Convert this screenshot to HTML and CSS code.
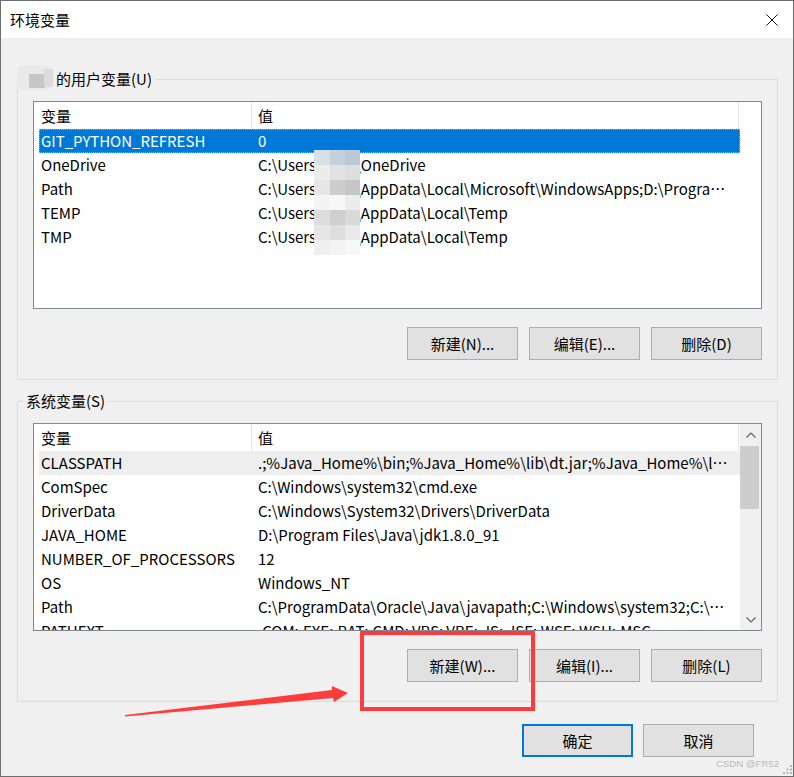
FILE: index.html
```html
<!DOCTYPE html>
<html lang="zh-CN">
<head>
    <meta charset="UTF-8">
    <title>环境变量</title>
    <link rel="stylesheet" href="styles.css">
</head>
<body>
    <div class="window">
        <!-- 标题栏 -->
        <div class="titlebar">
            <span class="title">环境变量</span>
            <svg class="close-icon" width="12" height="12" viewBox="0 0 12 12">
                <path d="M0.5 0.5 L11.5 11.5 M11.5 0.5 L0.5 11.5" stroke="#111" stroke-width="1" fill="none"/>
            </svg>
        </div>

        <!-- 用户变量 -->
        <div class="group">
            <div class="group-label"><span class="name-mask"></span>的用户变量(U)</div>
            <div class="label-mosaic"><div class="lm-dark"></div><div class="lm-mid"></div></div>
            <div class="listview">
                <div class="lv-body">
                    <div class="lv-header">
                        <div class="col-name">变量</div>
                        <div class="col-value">值</div>
                    </div>
                    <div class="lv-row selected">
                        <div class="col-name">GIT_PYTHON_REFRESH</div>
                        <div class="col-value">0</div>
                    </div>
                    <div class="lv-row">
                        <div class="col-name">OneDrive</div>
                        <div class="col-value">C:\Users\<span class="user-mask"></span>\OneDrive</div>
                    </div>
                    <div class="lv-row">
                        <div class="col-name">Path</div>
                        <div class="col-value">C:\Users\<span class="user-mask"></span>\AppData\Local\Microsoft\WindowsApps;D:\Program Files\Git\cmd</div>
                    </div>
                    <div class="lv-row">
                        <div class="col-name">TEMP</div>
                        <div class="col-value">C:\Users\<span class="user-mask"></span>\AppData\Local\Temp</div>
                    </div>
                    <div class="lv-row">
                        <div class="col-name">TMP</div>
                        <div class="col-value">C:\Users\<span class="user-mask"></span>\AppData\Local\Temp</div>
                    </div>
                </div>
                <!-- 打码 -->
                <div class="mosaic">
                    <i style="background:#d8e0e7"></i><i style="background:#c3d1dd"></i><i style="background:#b9c9d6"></i>
                    <i style="background:#ececec"></i><i style="background:#e2e2e2"></i><i style="background:#dedede"></i>
                    <i style="background:#e6e6e6"></i><i style="background:#cdcdcd"></i><i style="background:#c6c6c6"></i>
                    <i style="background:#f4f4f4"></i><i style="background:#f7f7f7"></i><i style="background:#ececec"></i>
                    <i style="background:#dcdcdc"></i><i style="background:#cfcfcf"></i><i style="background:#d9d9d9"></i>
                    <i style="background:#e6e6e6"></i><i style="background:#dedede"></i><i style="background:#e9e9e9"></i>
                    <i style="background:#efefef"></i><i style="background:#f3f3f3"></i><i style="background:#f8f8f8"></i>
                </div>
            </div>
            <div class="btn-row">
                <button class="btn">新建(N)...</button>
                <button class="btn">编辑(E)...</button>
                <button class="btn">删除(D)</button>
            </div>
        </div>

        <!-- 系统变量 -->
        <div class="group">
            <div class="group-label">系统变量(S)</div>
            <div class="listview">
                <div class="lv-body">
                    <div class="lv-header">
                        <div class="col-name">变量</div>
                        <div class="col-value">值</div>
                    </div>
                    <div class="lv-row inactive">
                        <div class="col-name">CLASSPATH</div>
                        <div class="col-value">.;%Java_Home%\bin;%Java_Home%\lib\dt.jar;%Java_Home%\lib\tools.jar</div>
                    </div>
                    <div class="lv-row">
                        <div class="col-name">ComSpec</div>
                        <div class="col-value">C:\Windows\system32\cmd.exe</div>
                    </div>
                    <div class="lv-row">
                        <div class="col-name">DriverData</div>
                        <div class="col-value">C:\Windows\System32\Drivers\DriverData</div>
                    </div>
                    <div class="lv-row">
                        <div class="col-name">JAVA_HOME</div>
                        <div class="col-value">D:\Program Files\Java\jdk1.8.0_91</div>
                    </div>
                    <div class="lv-row">
                        <div class="col-name">NUMBER_OF_PROCESSORS</div>
                        <div class="col-value">12</div>
                    </div>
                    <div class="lv-row">
                        <div class="col-name">OS</div>
                        <div class="col-value">Windows_NT</div>
                    </div>
                    <div class="lv-row">
                        <div class="col-name">Path</div>
                        <div class="col-value">C:\ProgramData\Oracle\Java\javapath;C:\Windows\system32;C:\Windows</div>
                    </div>
                    <div class="lv-row">
                        <div class="col-name">PATHEXT</div>
                        <div class="col-value">.COM;.EXE;.BAT;.CMD;.VBS;.VBE;.JS;.JSE;.WSF;.WSH;.MSC</div>
                    </div>
                </div>
                <div class="scrollbar">
                    <div class="sb-arrow">
                        <svg width="10" height="6" viewBox="0 0 10 6"><polyline points="0.5,5.5 5,1 9.5,5.5" fill="none" stroke="#606060" stroke-width="1.2"/></svg>
                    </div>
                    <div class="sb-thumb"></div>
                    <div class="sb-track"></div>
                    <div class="sb-arrow">
                        <svg width="10" height="6" viewBox="0 0 10 6"><polyline points="0.5,0.5 5,5 9.5,0.5" fill="none" stroke="#606060" stroke-width="1.2"/></svg>
                    </div>
                </div>
            </div>
            <div class="btn-row">
                <button class="btn">新建(W)...</button>
                <button class="btn">编辑(I)...</button>
                <button class="btn">删除(L)</button>
            </div>
        </div>

        <div class="dialog-buttons">
            <button class="btn default">确定</button>
            <button class="btn">取消</button>
        </div>

        <div class="watermark">CSDN @FR52</div>
        <svg class="grip" width="9" height="9" viewBox="0 0 9 9">
            <rect x="7" y="0" width="2" height="2" fill="#b5b5b5"/>
            <rect x="3.5" y="3.5" width="2" height="2" fill="#b5b5b5"/>
            <rect x="7" y="3.5" width="2" height="2" fill="#b5b5b5"/>
            <rect x="0" y="7" width="2" height="2" fill="#b5b5b5"/>
            <rect x="3.5" y="7" width="2" height="2" fill="#b5b5b5"/>
            <rect x="7" y="7" width="2" height="2" fill="#b5b5b5"/>
        </svg>

        <!-- 红色标注 -->
        <svg class="annotation" width="794" height="777" viewBox="0 0 794 777">
            <rect x="362" y="633" width="171" height="76" fill="none" stroke="#ff3c3c" stroke-width="4"/>
            <polygon points="125,715 332,690 332,686 348,693 334,702 333,698 125,716.5" fill="#ff3c3c"/>
        </svg>
    </div>
</body>
</html>
```

FILE: styles.css
```css
/* 环境变量对话框 */
* {
    margin: 0;
    padding: 0;
    box-sizing: border-box;
}

body {
    font-family: "Noto Sans CJK SC", "Liberation Sans", sans-serif;
    font-size: 15px;
    color: #000;
    background: #fff;
}

.window {
    position: relative;
    width: 794px;
    height: 777px;
    border: 1px solid #6e6e6e;
    background: #f0f0f0;
    overflow: hidden;
}

.titlebar {
    height: 37px;
    background: #fff;
    display: flex;
    align-items: center;
    justify-content: space-between;
    padding: 0 15px 0 9px;
}

.title {
    font-size: 15px;
}

/* 分组框 */
.group {
    position: relative;
    border: 1px solid #dcdcdc;
    margin: 41px 15px 0 16px;
    padding: 0 15px 19px 15px;
}

.group + .group {
    margin-top: 21px;
}

.group-label {
    width: fit-content;
    margin: -11px 0 0 -10px;
    padding: 0 3px;
    line-height: 20px;
    background: #f0f0f0;
}

.name-mask {
    display: inline-block;
    width: 30px;
}

.label-mosaic {
    position: absolute;
    left: -1px;
    top: -15px;
    width: 37px;
    height: 25px;
    background: #e9e9e9;
    border-radius: 9px 12px 10px 6px;
}

.lm-mid {
    position: absolute;
    left: 27px;
    top: 4px;
    width: 9px;
    height: 18px;
    background: #dcdcdc;
}

.lm-dark {
    position: absolute;
    left: 12px;
    top: 9px;
    width: 16px;
    height: 14px;
    background: #c6c6c6;
}

/* 列表 */
.listview {
    position: relative;
    margin-top: 12px;
    height: 208px;
    border: 1px solid #828790;
    background: #fff;
    display: flex;
    overflow: hidden;
}

.lv-body {
    width: 706px;
    padding-left: 5px;
}

.lv-header {
    display: flex;
    height: 27px;
    line-height: 27px;
}

.lv-header .col-name,
.lv-header .col-value {
    border-right: 1px solid #e5e5e5;
}

.lv-row {
    display: flex;
    height: 24px;
    line-height: 24px;
    white-space: nowrap;
}

.col-name {
    width: 213px;
    padding-left: 2px;
    overflow: hidden;
}

.col-value {
    width: 487px;
    padding: 0 8px 0 6px;
    overflow: hidden;
    text-overflow: ellipsis;
    white-space: nowrap;
}

.lv-row.selected {
    background: #0078d7;
    color: #fff;
    outline: 1px dotted #f0a040;
    outline-offset: -1px;
}

.lv-row.inactive {
    background: #eeeeee;
}

.user-mask {
    display: inline-block;
    width: 33px;
}

.mosaic {
    position: absolute;
    left: 280px;
    top: 48px;
    width: 46px;
    display: grid;
    grid-template-columns: 16px 15px 15px;
    grid-auto-rows: 15px;
}

.mosaic i {
    display: block;
}

/* 滚动条 */
.scrollbar {
    width: 21px;
    background: #f0f0f0;
    display: flex;
    flex-direction: column;
}

.sb-arrow {
    height: 21px;
    display: flex;
    align-items: center;
    justify-content: center;
}

.sb-thumb {
    height: 63px;
    margin: 1px 2px 0 0;
    background: #cdcdcd;
}

.sb-track {
    flex: 1;
}

/* 按钮 */
.btn-row {
    display: flex;
    justify-content: flex-end;
    gap: 11px;
    margin-top: 18px;
}

.btn {
    width: 111px;
    height: 33px;
    border: 1px solid #adadad;
    background: #e1e1e1;
    font: inherit;
    color: #000;
}

.btn.default {
    border: 2px solid #0078d7;
}

.dialog-buttons {
    display: flex;
    justify-content: flex-end;
    gap: 10px;
    margin: 22px 39px 0 0;
}

.watermark {
    position: absolute;
    right: 14px;
    top: 756px;
    font-family: "Liberation Sans", sans-serif;
    font-size: 9.6px;
    line-height: 14px;
    color: #b8b8b8;
    white-space: nowrap;
}

.grip {
    position: absolute;
    left: 782px;
    top: 764px;
}

.annotation {
    position: absolute;
    left: -1px;
    top: -1px;
    pointer-events: none;
}
```
